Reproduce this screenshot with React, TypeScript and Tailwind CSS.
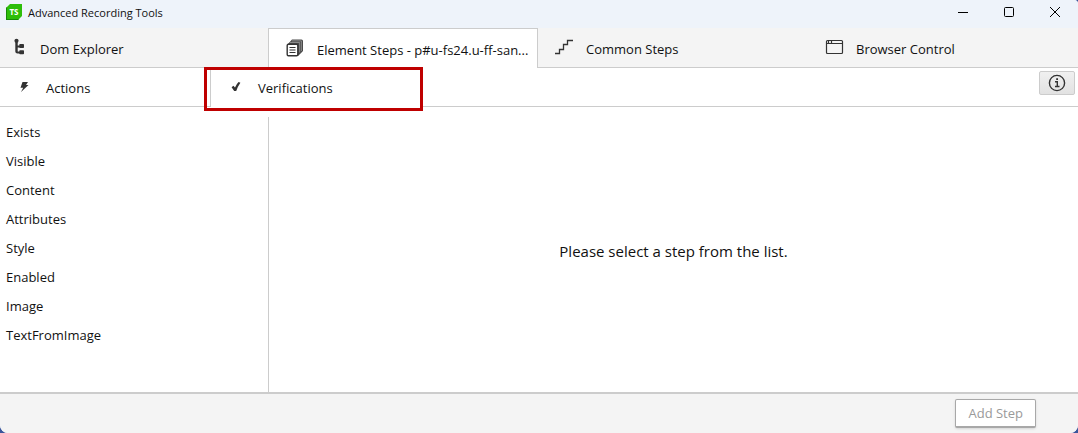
import type { ReactNode } from "react";

function LogoIcon() {
  return (
    <svg width="16" height="16" viewBox="0 0 16 16" aria-hidden="true">
      <path d="M4 0H16V12L12 16H0V4Z" fill="#2dbe0a" />
      <path d="M0 4L0 16H12L13 15H1V3Z" fill="#168a08" />
      <text x="8" y="11" textAnchor="middle" fontSize="8" fontWeight="700" fill="#fff" fontFamily="Open Sans, sans-serif">
        TS
      </text>
    </svg>
  );
}

function TreeIcon() {
  return (
    <svg width="20" height="20" viewBox="0 0 20 20" fill="#333" aria-hidden="true">
      <circle cx="6.5" cy="3.8" r="2.1" />
      <path d="M5.3 4H7.7V8.5H10V10.5H7.7V14.5H10V16.5H7.5Q5.3 16.5 5.3 14.5Z" />
      <rect x="9.3" y="7" width="4.7" height="4" rx="0.8" />
      <rect x="9.3" y="13.2" width="4.7" height="4" rx="0.8" />
    </svg>
  );
}

function StackIcon() {
  return (
    <svg width="20" height="20" viewBox="0 0 20 20" aria-hidden="true">
      <path d="M7 1.5H16.5Q18 1.5 18 3V13L13 18H12V7H2L7 1.5Z" fill="#4a4a4a" />
      <path d="M5 4.5H14.7V14.5M7 2.9H16.4V13" fill="none" stroke="#a5a5a5" strokeWidth="0.7" />
      <rect x="2.2" y="6.2" width="10.6" height="11.6" rx="1.2" fill="#fff" stroke="#333" strokeWidth="1.4" />
      <path d="M4.5 9.5H10.5M4.5 12H10.5M4.5 14.5H10.5" stroke="#333" strokeWidth="1.2" />
    </svg>
  );
}

function StairsIcon() {
  return (
    <svg width="20" height="20" viewBox="0 0 20 20" fill="none" stroke="#333" strokeWidth="1.3" aria-hidden="true">
      <path d="M1 16.5H5.5V12.5H9.5V7.5H13.5V3.5H19" />
    </svg>
  );
}

function BrowserIcon() {
  return (
    <svg width="20" height="20" viewBox="0 0 20 20" fill="none" stroke="#333" strokeWidth="1.2" aria-hidden="true">
      <rect x="2.5" y="3.5" width="16" height="13" rx="1" />
      <path d="M2.5 6.5H18.5M4.5 3.5V6.5M7.5 3.5V6.5" />
    </svg>
  );
}

function BoltIcon() {
  return (
    <svg width="12" height="12" viewBox="0 0 12 12" fill="#333" aria-hidden="true">
      <path d="M4.5 1H10L8 4H10.5L3 11L5.2 6.8H2.5Z" />
    </svg>
  );
}

function CheckIcon() {
  return (
    <svg width="12" height="12" viewBox="0 0 12 12" fill="#333" aria-hidden="true">
      <path d="M1.6 6.2L3.4 4.8L5 6.4Q6.5 3 8.6 1L10.4 1.8Q7.8 5.5 6.2 10H4.2Z" />
    </svg>
  );
}

function MainTab({ icon, label, selected = false }: { icon: ReactNode; label: string; selected?: boolean }) {
  return (
    <button
      role="tab"
      aria-selected={selected}
      className={
        selected
          ? "flex items-center gap-3 whitespace-nowrap border-x border-t border-[#cccccc] bg-white pb-0.5 pl-4 text-left"
          : "flex items-center gap-3 whitespace-nowrap border-b border-[#cccccc] pb-px pl-4 text-left"
      }
    >
      <span className="shrink-0">{icon}</span>
      <span className="pt-1">{label}</span>
    </button>
  );
}

const steps = ["Exists", "Visible", "Content", "Attributes", "Style", "Enabled", "Image", "TextFromImage"];

export default function App() {
  return (
    <div className="h-screen bg-[#3a559b]">
      <div className="flex h-full flex-col overflow-hidden rounded-b-lg rounded-tr-sm bg-white font-['Open_Sans','Noto_Sans',sans-serif] text-[13px] leading-5 text-[#111111]">
        <header className="flex h-7 shrink-0 items-center bg-[#eef3fa]">
          <div className="flex min-w-0 flex-1 items-center gap-1.5 pb-1 pl-1.5">
            <LogoIcon />
            <h1 className="pt-0.5 text-[11px] leading-4">Advanced Recording Tools</h1>
          </div>
          <div className="flex pb-1 text-black">
            <button aria-label="Minimize" className="flex w-[46px] justify-center">
              <svg width="10" height="10" viewBox="0 0 10 10" stroke="currentColor"><path d="M0 5.5H10" /></svg>
            </button>
            <button aria-label="Maximize" className="flex w-[46px] justify-center">
              <svg width="10" height="10" viewBox="0 0 10 10" fill="none" stroke="currentColor"><rect x=".5" y=".5" width="9" height="9" rx="1" /></svg>
            </button>
            <button aria-label="Close" className="flex w-[46px] justify-center">
              <svg width="10" height="10" viewBox="0 0 10 10" stroke="currentColor"><path d="M0 0L10 10M10 0L0 10" /></svg>
            </button>
          </div>
        </header>

        <div role="tablist" aria-label="Tools" className="grid h-10 shrink-0 grid-cols-[268fr_270fr_270fr_270fr] bg-[#f4f4f4]">
          <button role="tab" aria-selected={false} className="flex items-center gap-2.5 border-b border-[#cccccc] pb-px pl-2.5 text-left">
            <TreeIcon />
            <span className="pt-1">Dom Explorer</span>
          </button>
          <MainTab icon={<StackIcon />} label="Element Steps - p#u-fs24.u-ff-san..." selected />
          <MainTab icon={<StairsIcon />} label="Common Steps" />
          <MainTab icon={<BrowserIcon />} label="Browser Control" />
        </div>

        <div className="flex h-[39px] shrink-0">
          <div role="tablist" aria-label="Step types" className="flex">
            <button role="tab" aria-selected={false} className="flex w-[210px] items-center gap-4 border-b border-[#cccccc] pl-[18px] text-left">
              <BoltIcon />
              <span className="pt-0.5">Actions</span>
            </button>
            <button role="tab" aria-selected className="relative flex w-[211px] items-center gap-4 border-l border-[#cccccc] pb-px pl-[19px] text-left">
              <CheckIcon />
              <span className="pt-0.5">Verifications</span>
              <span className="pointer-events-none absolute -bottom-1 -left-[7px] -right-0.5 -top-px border-[3px] border-[#bf0000]" />
            </button>
          </div>
          <div className="flex flex-1 items-start justify-end border-b border-[#cccccc] pr-[3px] pt-[3px]">
            <button aria-label="Information" className="flex h-6 w-9 items-center justify-center rounded-xs border border-[#cccccc] bg-linear-to-b from-[#f0f0f0] to-[#e2e2e2]">
              <svg width="18" height="18" viewBox="0 0 18 18" fill="none" stroke="#333" strokeWidth="1.4" aria-hidden="true">
                <circle cx="9" cy="9" r="7.6" />
                <path d="M7 7.7H9.3V12.5M7 12.5H11.5" />
                <path d="M8.2 5.2H10" strokeWidth="1.8" />
              </svg>
            </button>
          </div>
        </div>

        <main className="grid min-h-0 flex-1 grid-cols-[268fr_810fr] pt-2.5">
          <ul className="pl-1.5">
            {steps.map((step) => (
              <li key={step}>
                <button className="flex h-[29px] w-full items-center text-left">{step}</button>
              </li>
            ))}
          </ul>
          <section className="flex items-center justify-center border-l border-[#cccccc] pb-2 text-[15px]">
            <p>Please select a step from the list.</p>
          </section>
        </main>

        <footer className="flex h-[41px] shrink-0 items-start justify-end border-t-2 border-[#cccccc] bg-[#f4f4f4] pr-[42px] pt-[5px]">
          <button disabled className="h-[29px] rounded-xs border border-b-2 border-[#a8a8a8] bg-white px-3 text-[#9a9a9a] shadow-sm">
            Add Step
          </button>
        </footer>
      </div>
    </div>
  );
}
